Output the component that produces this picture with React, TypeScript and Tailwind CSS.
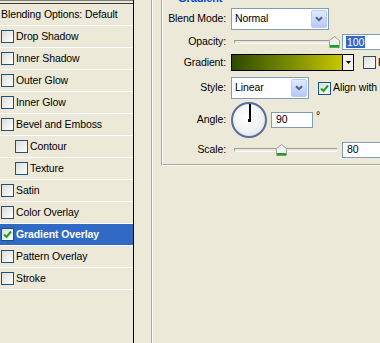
import React from "react";

const F = "font-['Liberation_Sans',Arial,sans-serif]";

function Check({ checked = false }: { checked?: boolean }) {
  return (
    <div className="flex h-[13px] w-[13px] shrink-0 items-center justify-center border border-[#1C5180] bg-[linear-gradient(135deg,#DCDCD7,#FFFFFF)]">
      {checked && (
        <svg width="9" height="9" viewBox="0 0 9 9">
          <path d="M1 4.5 L3.5 7 L8 1.5" fill="none" stroke="#21A121" strokeWidth="2" />
        </svg>
      )}
    </div>
  );
}

function DropBtn() {
  return (
    <div className="flex h-[18px] w-[16px] shrink-0 items-center justify-center rounded-[2px] border border-[#B8CDF6] bg-[linear-gradient(180deg,#E1EAFE,#B4C9F7)]">
      <svg width="8" height="6" viewBox="0 0 8 6">
        <path d="M1 1.2 L4 4.2 L7 1.2" fill="none" stroke="#4D6185" strokeWidth="2" />
      </svg>
    </div>
  );
}

function Select({ w, text }: { w: string; text: string }) {
  return (
    <div className={`flex h-[22px] items-center border border-[#7F9DB9] bg-white pl-[3px] pr-[1px] ${w}`}>
      <span className="flex-1">{text}</span>
      <DropBtn />
    </div>
  );
}

function Thumb() {
  return (
    <svg width="11" height="12" viewBox="0 0 11 12">
      <path d="M0.5 4.5 L5.5 0.5 L10.5 4.5 L10.5 11.5 L0.5 11.5 Z" fill="#F3F3EF" stroke="#A0A69A" />
      <rect x="1" y="9" width="9" height="2.5" fill="#21A121" />
    </svg>
  );
}

function Slider({ pos }: { pos: number }) {
  return (
    <div className="relative ml-[5px] flex h-[16px] w-[108px] items-center">
      <div className="ml-[3px] h-[4px] w-[103px] border-b border-l border-t border-b-white border-l-[#9D9C99] border-t-[#9D9C99] bg-[#ECE9D8]" />
      <div className="absolute top-[2px]" style={{ left: pos }}>
        <Thumb />
      </div>
    </div>
  );
}

function Label({ children }: { children: React.ReactNode }) {
  return <div className="w-[63px] shrink-0 text-right">{children}</div>;
}

const rows: { name: string; nested?: boolean; checked?: boolean; active?: boolean }[] = [
  { name: "Drop Shadow" },
  { name: "Inner Shadow" },
  { name: "Outer Glow" },
  { name: "Inner Glow" },
  { name: "Bevel and Emboss" },
  { name: "Contour", nested: true },
  { name: "Texture", nested: true },
  { name: "Satin" },
  { name: "Color Overlay" },
  { name: "Gradient Overlay", checked: true, active: true },
  { name: "Pattern Overlay" },
  { name: "Stroke" },
];

export default function App() {
  return (
    <div className={`flex h-[343px] w-[380px] overflow-hidden bg-[#ECE9D8] text-[10.5px] tracking-[-0.1px] text-black ${F}`}>
      {/* Left list */}
      <div className="flex w-[134px] shrink-0 flex-col border-r border-black">
        <div className="h-[1px] bg-[#7A7A7A]" />
        <div className="h-[2px]" />
        <div className="h-[1px] bg-[#3C3C3C]" />
        <div className="flex h-[22px] items-center border-b border-white pl-[1px]">Blending Options: Default</div>
        {rows.map((r) => (
          <div
            key={r.name}
            className={`flex h-[22px] items-center border-b border-white ${r.nested ? "pl-[15px]" : "pl-[1px]"} ${
              r.active ? "bg-[#316AC5] font-bold text-white" : ""
            }`}
          >
            <Check checked={r.checked} />
            <span className="ml-[2px]">{r.name}</span>
          </div>
        ))}
      </div>

      <div className="w-[17px] shrink-0" />

      {/* Etched vertical line */}
      <div className="flex flex-1 border-l border-[#ACA899]">
        <div className="flex flex-1 border-l border-white pl-[8px]">
          {/* Group box */}
          <div className="h-[166px] w-[260px] shrink-0 border-b border-l border-b-white border-l-[#ACA899]">
            <div className="flex h-[165px] flex-col border-b border-l border-b-[#ACA899] border-l-white">
              <div className="flex h-[4px] flex-col justify-end overflow-hidden pl-[15px]">
                <span className="text-[11px] font-bold leading-none text-[#0046D5]">Gradient</span>
              </div>

              {/* Blend mode */}
              <div className="mt-[4px] flex h-[22px] items-center">
                <Label>Blend Mode:</Label>
                <div className="ml-[5px]">
                  <Select w="w-[98px]" text="Normal" />
                </div>
              </div>

              {/* Opacity */}
              <div className="mt-[4px] flex h-[16px] items-center">
                <Label>Opacity:</Label>
                <Slider pos={98} />
                <div className="ml-[3px] flex h-[16px] w-[44px] items-center border border-[#7F9DB9] bg-white pl-[3px]">
                  <span className="bg-[#316AC5] px-[1px] leading-[12px] text-white">100</span>
                </div>
              </div>

              {/* Gradient */}
              <div className="mt-[4px] flex h-[17px] items-center">
                <Label>Gradient:</Label>
                <div className="ml-[5px] flex h-[17px] w-[123px] border border-black">
                  <div className="flex-1 bg-[linear-gradient(90deg,#2E4A00,#7E8E00_55%,#C9C500)]" />
                  <div className="flex w-[11px] items-center justify-center border-l border-black bg-[#F2F1EC]">
                    <svg width="5" height="3" viewBox="0 0 5 3">
                      <path d="M0 0 L5 0 L2.5 3 Z" fill="#000" />
                    </svg>
                  </div>
                </div>
                <div className="ml-[9px]">
                  <Check />
                </div>
                <span className="ml-[2px] whitespace-nowrap">Reverse</span>
              </div>

              {/* Style */}
              <div className="mt-[6px] flex h-[22px] items-center">
                <Label>Style:</Label>
                <div className="ml-[5px]">
                  <Select w="w-[78px]" text="Linear" />
                </div>
                <div className="ml-[9px]">
                  <Check checked />
                </div>
                <span className="ml-[2px] whitespace-nowrap">Align with Layer</span>
              </div>

              {/* Angle */}
              <div className="mt-[3px] flex h-[36px] items-center">
                <Label>Angle:</Label>
                <div className="relative ml-[5px] h-[36px] w-[36px] shrink-0 rounded-full border-2 border-[#5A6E9A] bg-[radial-gradient(circle_at_45%_40%,#FFFFFF,#F2F2F2_55%,#D9D9D9)]">
                  <div className="absolute left-[16px] top-[0px] h-[17px] w-[1.5px] bg-black" />
                  <div className="absolute left-[15px] top-[15px] h-[3px] w-[3px] bg-black" />
                </div>
                <div className="ml-[4px] flex h-[16px] w-[42px] items-center border border-[#7F9DB9] bg-white pl-[4px]">90</div>
                <span className="ml-[3px] self-start pt-[8px] leading-none">°</span>
              </div>

              {/* Scale */}
              <div className="mt-[4px] flex h-[16px] items-center">
                <Label>Scale:</Label>
                <Slider pos={45} />
                <div className="ml-[3px] flex h-[16px] w-[44px] items-center border border-[#7F9DB9] bg-white pl-[4px]">80</div>
              </div>
            </div>
          </div>
        </div>
      </div>
    </div>
  );
}
